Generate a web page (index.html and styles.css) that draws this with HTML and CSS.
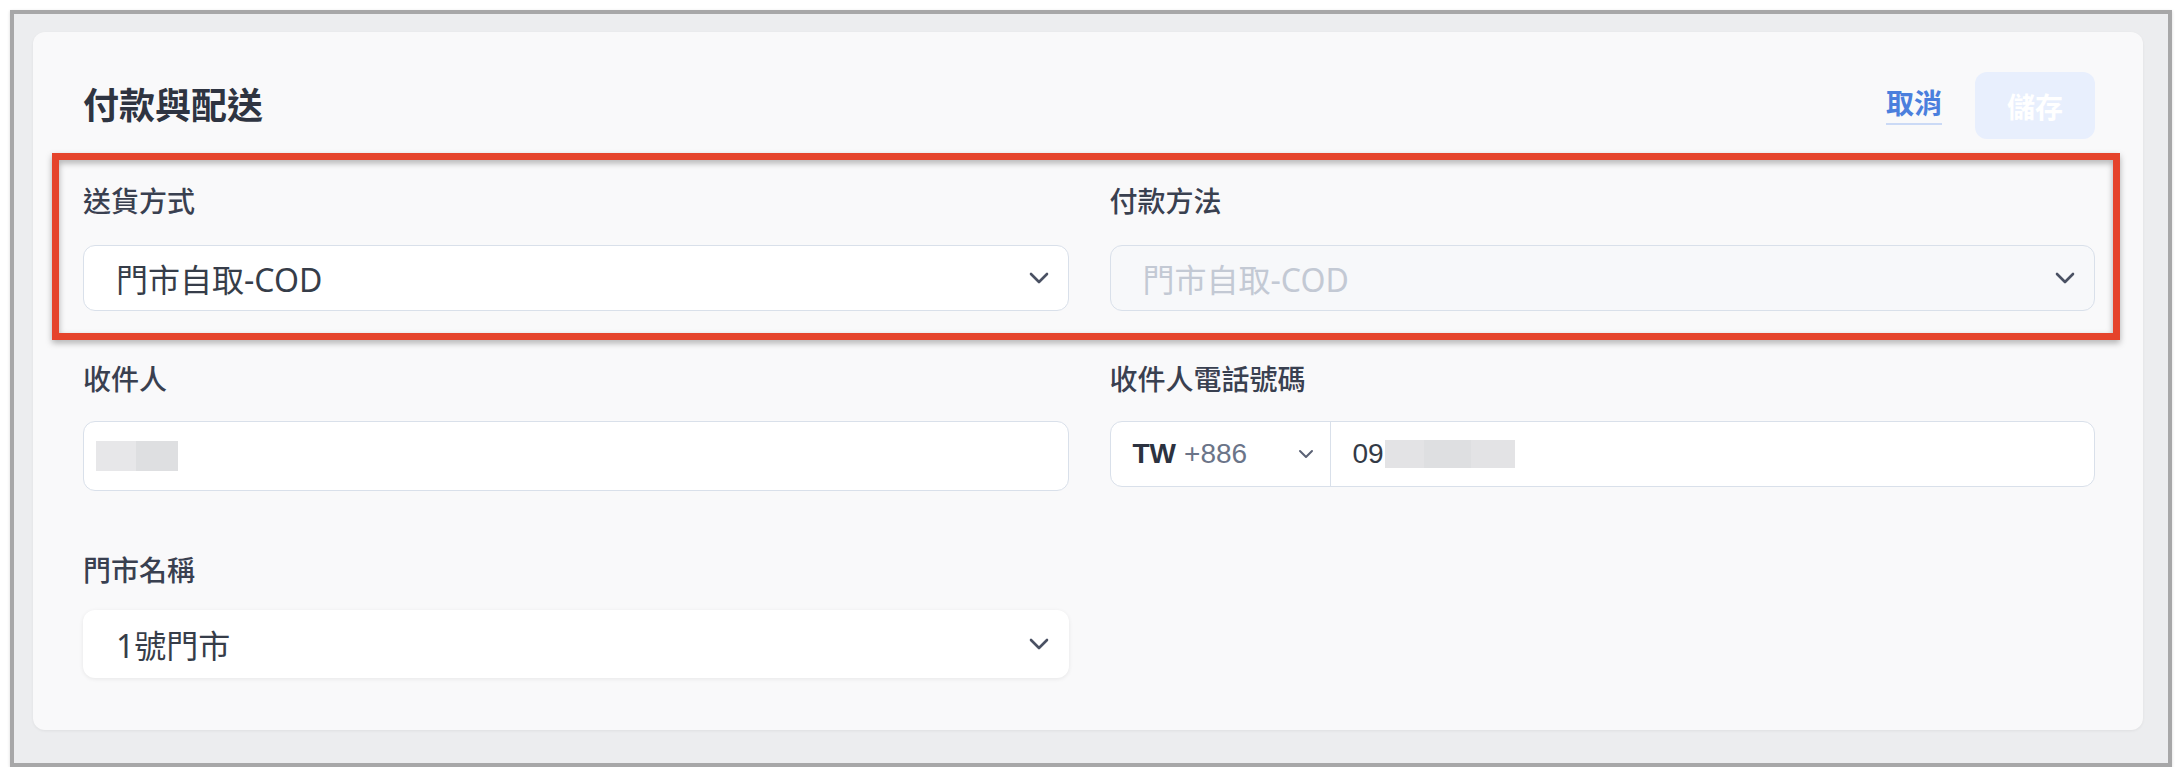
FILE: index.html
```html
<!DOCTYPE html>
<html lang="zh-Hant">
<head>
    <meta charset="UTF-8">
    <meta name="viewport" content="width=device-width, initial-scale=1.0">
    <title>付款與配送</title>
    <link rel="stylesheet" href="styles.css">
</head>
<body>
    <div class="frame">
        <section class="card">
            <header class="card-head">
                <h2 class="card-title">付款與配送</h2>
                <div class="actions">
                    <a class="link-cancel" href="#">取消</a>
                    <button class="btn-save" disabled>儲存</button>
                </div>
            </header>

            <!-- 第一列：送貨方式 / 付款方法（外框標記） -->
            <div class="row row-ship">
                <div class="field">
                    <label class="field-label">送貨方式</label>
                    <div class="select">
                        <span>門市自取-COD</span>
                        <svg class="chev" viewBox="0 0 20 12"><path d="M2 2l8 8 8-8"/></svg>
                    </div>
                </div>
                <div class="field">
                    <label class="field-label">付款方法</label>
                    <div class="select is-disabled">
                        <span>門市自取-COD</span>
                        <svg class="chev" viewBox="0 0 20 12"><path d="M2 2l8 8 8-8"/></svg>
                    </div>
                </div>
                <span class="mark"></span>
            </div>

            <div class="row row-contact">
                <div class="field">
                    <label class="field-label">收件人</label>
                    <div class="input input-name">
                        <span class="blur blur-a"></span><span class="blur blur-b"></span>
                    </div>
                </div>
                <div class="field">
                    <label class="field-label">收件人電話號碼</label>
                    <div class="phone">
                        <div class="phone-code">
                            <b>TW</b><span class="dial">+886</span>
                            <svg class="chev-sm" viewBox="0 0 16 10"><path d="M2 2l6 6 6-6"/></svg>
                        </div>
                        <div class="phone-num">
                            <span>09</span><span class="blur blur-num"></span>
                        </div>
                    </div>
                </div>
            </div>

            <div class="row row-store">
                <div class="field">
                    <label class="field-label">門市名稱</label>
                    <div class="select is-plain">
                        <span>1號門市</span>
                        <svg class="chev" viewBox="0 0 20 12"><path d="M2 2l8 8 8-8"/></svg>
                    </div>
                </div>
                <div class="field"></div>
            </div>
        </section>
    </div>
</body>
</html>
```

FILE: styles.css
```css
body {
    margin: 0;
    background: #ffffff;
    font-family: "Noto Sans", "Noto Sans CJK TC", sans-serif;
    color: #333a46;
}
.frame {
    margin: 10px 10px 0 10px;
    border: 4px solid #a7a7a8;
    background: #ecedef;
    padding: 18px 25px 33px 19px;
    box-shadow: 0 1px 3px rgba(0, 0, 0, 0.15);
}
.card {
    background: #f9f9fa;
    border-radius: 12px;
    padding: 40px 48px 52px 50px;
    box-shadow: 0 1px 3px rgba(0, 0, 0, 0.06);
}
.card-head {
    display: flex;
    align-items: center;
    justify-content: space-between;
    height: 67px;
}
.card-title {
    margin: 0;
    font-size: 36px;
    font-weight: 700;
    color: #2e3441;
    line-height: 44px;
}
.actions {
    display: flex;
    align-items: center;
    gap: 33px;
}
.link-cancel {
    color: #4b7fdd;
    font-size: 28px;
    font-weight: 700;
    text-decoration: none;
    line-height: 32px;
    padding-bottom: 4px;
    border-bottom: 2px solid #cbdaf6;
}
.btn-save {
    width: 120px;
    height: 67px;
    border: none;
    border-radius: 12px;
    background: #e8effd;
    color: #ffffff;
    font-family: inherit;
    font-size: 28px;
    font-weight: 700;
}
.row {
    display: grid;
    grid-template-columns: 1fr 1fr;
    column-gap: 41px;
    position: relative;
}
.row-ship { margin-top: 46px; }
.row-contact { margin-top: 52px; }
.row-store { margin-top: 63px; }
.field-label {
    display: block;
    font-size: 28px;
    line-height: 32px;
    font-weight: 500;
    color: #394050;
    margin-bottom: 28px;
}
.row-contact .field-label { margin-bottom: 26px; }
.row-store .field-label { margin-bottom: 24px; }

.select {
    height: 66px;
    box-sizing: border-box;
    display: flex;
    align-items: center;
    justify-content: space-between;
    padding: 0 19px 0 32px;
    background: #ffffff;
    border: 1px solid #d9e0ea;
    border-radius: 12px;
    font-size: 32px;
    color: #363d49;
}
.select.is-disabled {
    background: #f7f8fa;
    color: #c3c9d4;
}
.select.is-plain {
    height: 68px;
    border-color: transparent;
    box-shadow: 0 1px 4px rgba(0, 0, 0, 0.08);
}
.chev {
    width: 20px;
    height: 12px;
    fill: none;
    stroke: #4a5163;
    stroke-width: 2.6;
    stroke-linecap: round;
    stroke-linejoin: round;
}
.input {
    height: 70px;
    box-sizing: border-box;
    background: #ffffff;
    border: 1px solid #d9e0ea;
    border-radius: 12px;
    display: flex;
    align-items: center;
    padding-left: 12px;
}
.blur {
    display: inline-block;
    height: 30px;
}
.blur-a { width: 40px; background: #e7e7e9; }
.blur-b { width: 42px; background: #dedfe1; }

.phone {
    height: 66px;
    box-sizing: border-box;
    display: flex;
    background: #ffffff;
    border: 1px solid #d9e0ea;
    border-radius: 12px;
    font-family: "Liberation Sans", "Noto Sans", sans-serif;
    font-size: 28px;
}
.phone-code {
    width: 220px;
    box-sizing: border-box;
    display: flex;
    align-items: center;
    padding: 0 8px 0 22px;
    border-right: 1px solid #d9e0ea;
}
.phone-code b {
    color: #2c3240;
    font-weight: 700;
}
.dial {
    color: #6b7488;
    margin-left: 8px;
}
.chev-sm {
    width: 16px;
    height: 10px;
    margin-left: auto;
    margin-right: 8px;
    fill: none;
    stroke: #5b6275;
    stroke-width: 2;
    stroke-linecap: round;
    stroke-linejoin: round;
}
.phone-num {
    display: flex;
    align-items: center;
    padding-left: 22px;
    color: #333a46;
}
.blur-num {
    width: 130px;
    height: 28px;
    margin-left: 1px;
    background: linear-gradient(to right, #e3e3e5 0 30%, #dedfe1 30% 66%, #e3e3e5 66%);
}

/* czerwona ramka adnotacji */
.mark {
    position: absolute;
    left: -31px;
    right: -25px;
    top: -32px;
    bottom: -29px;
    border: 7px solid #e5432b;
    filter: drop-shadow(0 3px 3px rgba(0, 0, 0, 0.3));
    pointer-events: none;
}
```
